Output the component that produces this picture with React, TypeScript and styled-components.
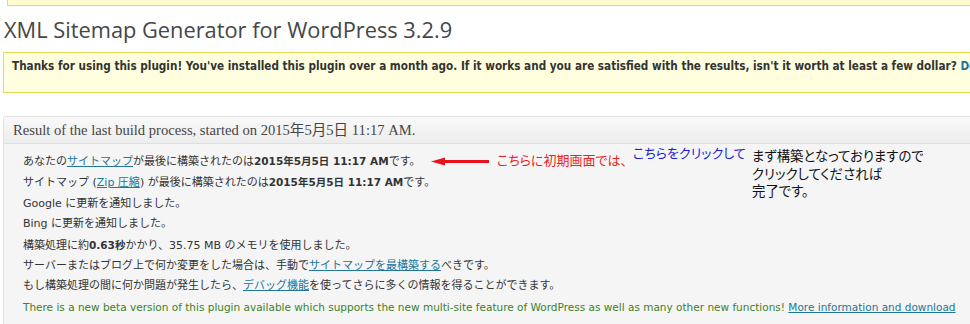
import React from 'react'
import styled, { createGlobalStyle } from 'styled-components'

const GlobalStyle = createGlobalStyle`
  html, body {
    margin: 0;
    padding: 0;
    background: #fff;
    overflow: hidden;
  }
`

const jp = `"DejaVu Sans", "Noto Sans CJK JP", sans-serif`

const Page = styled.div`
  position: relative;
  width: 970px;
  height: 324px;
  overflow: hidden;
`

const TopNotice = styled.div`
  margin-left: 7px;
  width: 1100px;
  height: 5px;
  background: #fffbcc;
  border: 1px solid #e6db55;
  border-top: none;
`

const Title = styled.h2`
  margin: 9px 0 0 4px;
  height: 30px;
  font-family: 'Open Sans', sans-serif;
  font-size: 21.8px;
  font-weight: 400;
  line-height: 30px;
  color: #464646;
`

const Notice = styled.div`
  margin: 7px 0 0 3px;
  width: 1100px;
  height: 39px;
  box-sizing: content-box;
  padding: 0 8px;
  background: #ffffe0;
  border: 1px solid #e6db55;
  font-family: "DejaVu Sans Condensed", "DejaVu Sans", sans-serif;
  font-size: 11.65px;
  font-weight: 700;
  line-height: 16px;
  color: #333;
  white-space: nowrap;

  p {
    margin: 5px 0 0;
  }
`

const Link = styled.a<{ $plain?: boolean }>`
  color: #21759b;
  text-decoration: ${p => (p.$plain ? 'none' : 'underline')};
`

const Postbox = styled.div`
  margin: 23px 0 0 3px;
  width: 1100px;
  height: 300px;
  border: 1px solid #dfdfdf;
  border-radius: 3px;
  background: #f5f5f5;
`

const PostboxHeader = styled.h3`
  margin: 0;
  height: 26px;
  padding-left: 9px;
  background: linear-gradient(to bottom, #f9f9f9, #ececec);
  border-bottom: 1px solid #dfdfdf;
  font-family: 'Liberation Serif', 'Noto Sans CJK JP', serif;
  font-size: 14.6px;
  font-weight: 400;
  line-height: 26px;
  color: #464646;
`

const PostboxBody = styled.ul`
  margin: 0;
  padding: 7px 0 0 19px;
  list-style: none;
  font-family: ${jp};
  font-size: 11px;
  line-height: 20.4px;
  color: #333;
`

const Line = styled.li<{ $green?: boolean }>`
  white-space: nowrap;
  font-size: ${p => (p.$green ? '10.5px' : '11px')};
  color: ${p => (p.$green ? '#3c8228' : '#333')};
`

const Strong = styled.b`
  font-weight: 700;
  font-size: 10.5px;
`

const Note = styled.div<{ $color: string; $size: number; $x: number; $y: number }>`
  position: absolute;
  left: ${p => p.$x}px;
  top: ${p => p.$y}px;
  font-family: 'Noto Sans CJK JP', sans-serif;
  font-feature-settings: 'palt';
  font-size: ${p => p.$size}px;
  line-height: 17.5px;
  color: ${p => p.$color};
  white-space: nowrap;
`

const Arrow = styled.svg`
  position: absolute;
  left: 431px;
  top: 155px;
`

export default function App() {
  return (
    <Page>
      <GlobalStyle />
      <TopNotice />
      <Title>XML Sitemap Generator for WordPress 3.2.9</Title>
      <Notice>
        <p>
          Thanks for using this plugin! You've installed this plugin over a month ago. If it works and you are
          satisfied with the results, isn't it worth at least a few dollar?{' '}
          <Link $plain href='#'>
            Donations
          </Link>
        </p>
      </Notice>
      <Postbox>
        <PostboxHeader>Result of the last build process, started on 2015年5月5日 11:17 AM.</PostboxHeader>
        <PostboxBody>
          <Line>
            あなたの<Link href='#'>サイトマップ</Link>が最後に構築されたのは<Strong>2015年5月5日 11:17 AM</Strong>です。
          </Line>
          <Line>
            サイトマップ (<Link href='#'>Zip 圧縮</Link>) が最後に構築されたのは<Strong>2015年5月5日 11:17 AM</Strong>です。
          </Line>
          <Line>Google に更新を通知しました。</Line>
          <Line>Bing に更新を通知しました。</Line>
          <Line>
            構築処理に約<Strong>0.63秒</Strong>かかり、35.75 MB のメモリを使用しました。
          </Line>
          <Line>
            サーバーまたはブログ上で何か変更をした場合は、手動で<Link href='#'>サイトマップを最構築する</Link>べきです。
          </Line>
          <Line>
            もし構築処理の間に何か問題が発生したら、<Link href='#'>デバッグ機能</Link>を使ってさらに多くの情報を得ることができます。
          </Line>
          <Line $green>
            There is a new beta version of this plugin available which supports the new multi-site feature of
            WordPress as well as many other new functions! <Link href='#'>More information and download</Link>
          </Line>
        </PostboxBody>
      </Postbox>

      <Arrow width='60' height='13' viewBox='0 0 60 13'>
        <polygon points='0,6.5 14,2.5 14,10.5' fill='#e8141b' />
        <line x1='12' y1='6.5' x2='58' y2='6.5' stroke='#e8141b' strokeWidth='3' />
      </Arrow>
      <Note $color='#ee1f1f' $size={13} $x={497} $y={151}>
        こちらに初期画面では、
      </Note>
      <Note $color='#1c1cd6' $size={13} $x={633} $y={144}>
        こちらをクリックして
      </Note>
      <Note $color='#111' $size={13.4} $x={752} $y={147}>
        まず構築となっておりますので
        <br />
        クリックしてくだされば
        <br />
        完了です。
      </Note>
    </Page>
  )
}
